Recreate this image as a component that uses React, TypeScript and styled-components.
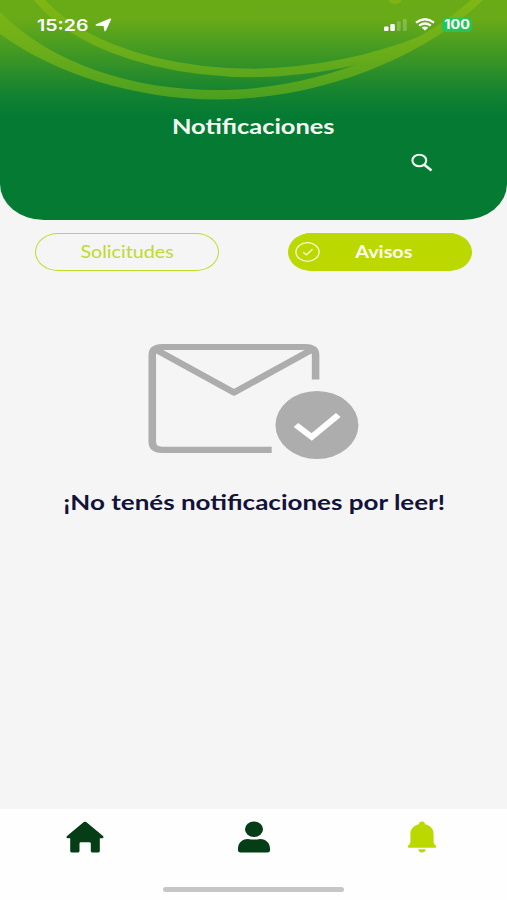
import React from "react";
import styled, { createGlobalStyle } from "styled-components";

const GlobalStyle = createGlobalStyle`
  * { box-sizing: border-box; }
  body { margin: 0; background: #f5f5f5; }
`;

const Screen = styled.div`
  display: flex;
  flex-direction: column;
  width: 507px;
  height: 900px;
  overflow: hidden;
  background: #f5f5f5;
  font-family: Lato, sans-serif;
`;

const Header = styled.header`
  position: relative;
  height: 219.5px;
  flex: none;
  overflow: hidden;
  border-radius: 0 0 44px 44px / 0 0 36px 36px;
  background: linear-gradient(#69ab17 0, #68aa17 20px, #4d9f20 42px, #2e8f29 70px, #138231 94px, #047a33 116px);
`;

const Rings = styled.svg`
  position: absolute;
  inset: 0;
`;

const StatusBar = styled.div`
  position: relative;
  display: flex;
  align-items: center;
  height: 49px;
  padding: 0 35px 0 37px;
  color: #fff;
`;

const StatusIcons = styled.div`
  display: flex;
  align-items: center;
  gap: 7px;
  margin-left: auto;
`;

/* Lettering drawn wider than its natural proportions. */
const Wide = styled.span<{ $x?: number; $origin?: string }>`
  display: inline-block;
  white-space: nowrap;
  transform: scaleX(${(p) => p.$x ?? 1.22});
  transform-origin: ${(p) => p.$origin ?? "center"};
`;

const Clock = styled.time`
  width: 58px;
  font: 600 16px/20px Inter, sans-serif;
`;

const Battery = styled.span`
  display: flex;
  align-items: center;
  justify-content: center;
  width: 30px;
  height: 14px;
  border-radius: 4px;
  background: #25c456;
  font: 700 12.5px/14px Inter, sans-serif;
`;

const Title = styled.h1`
  position: relative;
  margin: 65px 0 0;
  text-align: center;
  font-size: 21px;
  font-weight: 700;
  line-height: 24px;
  color: #f4fbf3;
`;

const Tools = styled.div`
  display: flex;
  justify-content: flex-end;
  padding: 15px 74px 0 0;
`;

const IconButton = styled.button`
  display: flex;
  padding: 0;
  border: 0;
  background: none;
`;

const Tabs = styled.div`
  display: flex;
  justify-content: space-between;
  padding: 13.5px 34.6px 0 35.4px;
`;

const Tab = styled.button<{ $active?: boolean }>`
  display: grid;
  grid-template-columns: 26px 1fr ${(p) => (p.$active ? "20px" : "26px")};
  align-items: center;
  width: 184px;
  height: 38px;
  padding: 0 6px;
  border: 1px solid ${(p) => (p.$active ? "#bbd900" : "#c0da28")};
  border-radius: 23px / 19px;
  background: ${(p) => (p.$active ? "#bbd900" : "transparent")};
  color: ${(p) => (p.$active ? "#fbfdea" : "#c0da28")};
  font: ${(p) => (p.$active ? 700 : 400)} 16.5px/20px Lato, sans-serif;
`;

const TabLabel = styled.span`
  grid-column: 2;
  text-align: center;
`;

const Empty = styled.main`
  display: flex;
  flex: 1;
  flex-direction: column;
  align-items: center;
  padding-top: 72px;
`;

const Message = styled.p`
  margin: 29px 0 0 1px;
  font-size: 21px;
  font-weight: 700;
  line-height: 24px;
  color: #12123a;
`;

const Footer = styled.footer`
  display: flex;
  flex-direction: column;
  align-items: center;
  height: 91px;
  background: #fefefe;
`;

const Nav = styled.nav`
  display: grid;
  grid-template-columns: repeat(3, 1fr);
  justify-items: center;
  width: 100%;
  height: 78px;
  padding-top: 12px;
  align-items: start;
`;

const HomeIndicator = styled.div`
  width: 181px;
  height: 5px;
  border-radius: 3px;
  background: #c6c6c6;
`;

export default function App() {
  return (
    <Screen>
      <GlobalStyle />
      <Header>
        <Rings width="507" height="220" fill="none" aria-hidden>
          <defs>
            <linearGradient id="ring" gradientUnits="userSpaceOnUse" x1="0" y1="0" x2="0" y2="100">
              <stop offset="0" stopColor="#80b714" />
              <stop offset=".5" stopColor="#6cae19" />
              <stop offset="1" stopColor="#4a9f21" />
            </linearGradient>
          </defs>
          <path
            d="M35 -5C49 12 64 24 80 33C120 56 180 73 254 73C305 72 365 63 425 39"
            stroke="url(#ring)"
            strokeWidth="8.5"
          />
          <path
            fill="url(#ring)"
            d="M0 12C52 64 132 90 218 90C313 90 415 50 471 0H483C425 57 320 99.500 218 99.500C135 99.500 55 74 0 34Z"
          />
          <ellipse cx="395" cy="0" rx="6.500" ry="4" fill="#7db414" />
        </Rings>
        <StatusBar>
          <Clock>
            <Wide $x={1.22} $origin="left">15:26</Wide>
          </Clock>
          <svg width="17" height="14" viewBox="0 0 17 14" fill="#fff">
            <path d="M14.800 .5Q16.700 0 16 1.800L11 12.600Q9.800 14.200 9.200 12.600L8.600 8L1.300 7.700Q-.4 7.200 1.200 6.200Z" />
          </svg>
          <StatusIcons>
            <svg width="24" height="14" viewBox="0 0 24 14" fill="#fff">
              <rect x="0" y="8.500" width="4.500" height="4.500" rx="1" />
              <rect x="6.300" y="6" width="4.500" height="7" rx="1" />
              <rect x="12.900" y="3.300" width="3.700" height="9.700" rx="1" opacity=".22" />
              <rect x="19" y="1" width="3.700" height="12" rx="1" opacity=".22" />
            </svg>
            <svg width="20" height="13" viewBox="0 0 20 13" fill="none" stroke="#fff" strokeWidth="2.400">
              <path d="M1 4.600Q10 -2 19 4.600M4.200 7.600Q10 3.200 15.800 7.600" />
              <path d="M6.700 9.600Q10 7.300 13.300 9.600L10 12.800Z" fill="#fff" stroke="none" />
            </svg>
            <Battery>
              <Wide $x={1.15}>100</Wide>
            </Battery>
          </StatusIcons>
        </StatusBar>
        <Title>
          <Wide $x={1.21}>Notificaciones</Wide>
        </Title>
        <Tools>
          <IconButton aria-label="Buscar">
            <svg width="22" height="19" viewBox="0 0 22 19" fill="none" stroke="#f4fbf3" strokeWidth="2.100">
              <ellipse cx="8.300" cy="7.500" rx="6.900" ry="5.800" />
              <path d="M13 11.500L20.500 17.500" strokeWidth="2.600" />
            </svg>
          </IconButton>
        </Tools>
      </Header>
      <Tabs>
        <Tab>
          <TabLabel>
            <Wide $x={1.195}>Solicitudes</Wide>
          </TabLabel>
        </Tab>
        <Tab $active>
          <svg width="26" height="20" viewBox="0 0 26 20" fill="none" stroke="#f6fad2" strokeWidth="1.300">
            <ellipse cx="12.500" cy="10" rx="11.600" ry="9.300" />
            <path d="M8.200 10.300L11.400 12.800L17.500 7.300" />
          </svg>
          <TabLabel>
            <Wide $x={1.2}>Avisos</Wide>
          </TabLabel>
        </Tab>
      </Tabs>
      <Empty>
        <svg width="212" height="118" viewBox="0 0 173.8 118" preserveAspectRatio="none" fill="none" stroke="#adadad" strokeWidth="6.200">
          <path d="M137.400 36.500V12Q137.400 4 129.400 4H11.500Q3.500 4 3.500 12V98.800Q3.500 106.800 11.500 106.800H101.400" />
          <path d="M5.500 6L70.500 49.500L135.300 6" strokeLinejoin="round" />
          <circle cx="138.500" cy="82" r="34" fill="#adadad" stroke="none" />
          <path d="M121.300 82L134.200 94L156 72" stroke="#fff" strokeWidth="5.400" />
        </svg>
        <Message>
          <Wide $x={1.238}>¡No tenés notificaciones por leer!</Wide>
        </Message>
      </Empty>
      <Footer>
        <Nav>
          <IconButton aria-label="Inicio">
            <svg width="38" height="32" viewBox="0 0 38 32" fill="#053d16">
              <path d="M17.800 1.100Q19 .2 20.200 1.100L37 15.100Q38.300 16.800 36.500 17.300H33.800V30Q33.800 31.500 32 31.500H26.500Q24.800 31.500 24.800 30V22.500Q24.800 21.200 23.300 21.200H15Q13.500 21.200 13.500 22.500V30Q13.500 31.500 11.800 31.500H6Q4.200 31.500 4.200 30V17.300H1.500Q-.3 16.800 1 15.100Z" />
            </svg>
          </IconButton>
          <IconButton aria-label="Perfil">
            <svg width="32" height="32" viewBox="0 0 32 32" fill="#053d16">
              <ellipse cx="16" cy="8.200" rx="9" ry="7.700" />
              <path d="M10 18Q16 19.200 22 18C28.500 18 32 22.500 32 27.500V29.500Q32 31.500 29.500 31.500H2.500Q0 31.500 0 29.500V27.500C0 22.500 3.500 18 10 18Z" />
            </svg>
          </IconButton>
          <IconButton aria-label="Notificaciones">
            <svg width="31" height="32" viewBox="0 0 31 32" fill="#bbd900">
              <path d="M15 .5C17 .5 18 1.700 18 3.200C24 4.500 26.600 8.500 26.600 13V20.500C26.600 22.500 27.500 23.500 28.800 24.500Q30 26 28.500 26.700H1.500Q0 26 1.200 24.500C2.500 23.500 3.400 22.500 3.400 20.500V13C3.400 8.500 6 4.500 12 3.200C12 1.700 13 .5 15 .5ZM11.300 28.300H18.700Q18.300 31.500 15 31.500T11.300 28.300Z" />
            </svg>
          </IconButton>
        </Nav>
        <HomeIndicator />
      </Footer>
    </Screen>
  );
}
